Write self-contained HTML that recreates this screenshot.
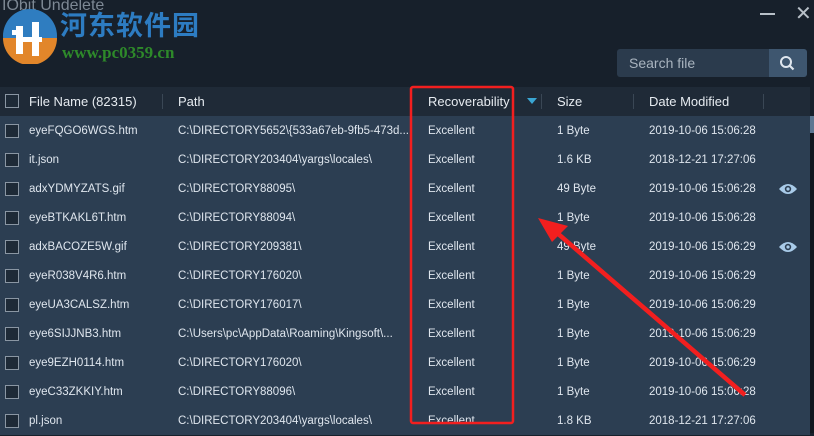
<!DOCTYPE html>
<html><head><meta charset="utf-8"><style>
*{margin:0;padding:0;box-sizing:border-box}
body{width:814px;height:433px;overflow:hidden;background:#17202b;font-family:"Liberation Sans",sans-serif;position:relative}
.abs{position:absolute}
.row{position:absolute;left:0;width:810px;height:29px;background:#2c3e52;color:#dfe6ee;font-size:11.5px}
.row span,.hd span{position:absolute;top:0;white-space:nowrap}
.row span{top:1px}
.cb{position:absolute;left:5px;width:14px;height:14px;border:1px solid #8a96a3;background:#1e2a37}
.eye{position:absolute;left:779px;top:9px}
</style></head><body>
<div class="abs" style="left:2px;color:#7d8894;font-size:16px;line-height:20px;top:-4px">IObit Undelete</div>
<svg class="abs" style="left:2px;top:8px" width="56" height="56" viewBox="0 0 56 56">
<circle cx="28" cy="28" r="27" fill="#2f7dc0"/>
<path d="M1 30 A27 27 0 0 0 55 30 Z" fill="#e2862a"/>
<rect x="14" y="18" width="7" height="28" fill="#fff"/>
<rect x="30" y="14" width="7" height="34" fill="#fff"/>
<rect x="10" y="22" width="10" height="5" fill="#fff"/>
<rect x="14" y="29" width="26" height="5" fill="#fff"/>
</svg>
<div class="abs" style="left:60px;top:8px;color:#2d7cc2;font-size:27px;font-weight:bold;font-family:'Noto Sans CJK SC',sans-serif;line-height:32px;letter-spacing:1px">河东软件园</div>
<div class="abs" style="left:62px;top:43px;color:#2e8a2a;font-size:17px;font-weight:bold;font-family:'Liberation Serif',serif">www.pc0359.cn</div>
<div class="abs" style="left:760px;top:13px;width:15px;height:2px;background:#b8c0c8"></div>
<div class="abs" style="left:795px;top:1px;color:#b8c0c8;font-size:20px">✕</div>
<div class="abs" style="left:617px;top:49px;width:152px;height:28px;background:#2b3b4d;border-radius:3px 0 0 3px;color:#a9b4bf;font-size:14px;line-height:28px;padding-left:12px">Search file</div>
<div class="abs" style="left:769px;top:49px;width:38px;height:28px;background:#3e566f;border-radius:0 3px 3px 0"></div>
<svg class="abs" style="left:779px;top:55px" width="16" height="16"><circle cx="7" cy="7" r="5" fill="none" stroke="#dfe6ee" stroke-width="2"/><line x1="10.5" y1="10.5" x2="14.5" y2="14.5" stroke="#dfe6ee" stroke-width="2.2"/></svg>
<div class="abs hd" style="left:0;top:87px;width:810px;height:29px;background:#1f2a37;color:#e6ebf0;font-size:13px;line-height:29px">
<div class="cb" style="top:7px"></div>
<span style="left:29px">File Name (82315)</span>
<div class="abs" style="left:162px;top:7px;width:1px;height:15px;background:#3a4755"></div>
<span style="left:178px">Path</span>
<span style="left:428px">Recoverability</span>
<svg class="abs" style="left:527px;top:11px" width="10" height="6"><path d="M0 0h10L5 6z" fill="#3aa6d3"/></svg>
<div class="abs" style="left:541px;top:7px;width:1px;height:15px;background:#3a4755"></div>
<span style="left:557px">Size</span>
<div class="abs" style="left:633px;top:7px;width:1px;height:15px;background:#3a4755"></div>
<span style="left:649px">Date Modified</span>
<div class="abs" style="left:763px;top:7px;width:1px;height:15px;background:#3a4755"></div>
</div>
<div class="abs" style="left:810px;top:116px;width:4px;height:317px;background:#11171f"></div>
<div class="abs" style="left:810px;top:116px;width:4px;height:17px;background:#5d7792"></div>
<div class="abs" style="left:0;top:116px;width:810px;height:317px;background:#2c3e52"></div>
<div id="rows"></div>
<svg class="abs" style="left:0;top:0" width="814" height="433">
<rect x="411" y="87" width="102" height="336" fill="none" stroke="#f21f1f" stroke-width="2.5" rx="2"/>
<line x1="745" y1="395" x2="556" y2="232" stroke="#f21f1f" stroke-width="4.5"/>
<path d="M538 218 L568 226 L552 242 Z" fill="#f21f1f"/>
</svg>
<script>
var d=[["eyeFQGO6WGS.htm","C:\\DIRECTORY5652\\{533a67eb-9fb5-473d...","1 Byte","2019-10-06 15:06:28",0],
["it.json","C:\\DIRECTORY203404\\yargs\\locales\\","1.6 KB","2018-12-21 17:27:06",0],
["adxYDMYZATS.gif","C:\\DIRECTORY88095\\","49 Byte","2019-10-06 15:06:28",1],
["eyeBTKAKL6T.htm","C:\\DIRECTORY88094\\","1 Byte","2019-10-06 15:06:28",0],
["adxBACOZE5W.gif","C:\\DIRECTORY209381\\","49 Byte","2019-10-06 15:06:29",1],
["eyeR038V4R6.htm","C:\\DIRECTORY176020\\","1 Byte","2019-10-06 15:06:29",0],
["eyeUA3CALSZ.htm","C:\\DIRECTORY176017\\","1 Byte","2019-10-06 15:06:29",0],
["eye6SIJJNB3.htm","C:\\Users\\pc\\AppData\\Roaming\\Kingsoft\\...","1 Byte","2019-10-06 15:06:29",0],
["eye9EZH0114.htm","C:\\DIRECTORY176020\\","1 Byte","2019-10-06 15:06:29",0],
["eyeC33ZKKIY.htm","C:\\DIRECTORY88096\\","1 Byte","2019-10-06 15:06:28",0],
["pl.json","C:\\DIRECTORY203404\\yargs\\locales\\","1.8 KB","2018-12-21 17:27:06",0]];
var h="";
d.forEach(function(r,i){
h+='<div class="row" style="top:'+(116+i*29)+'px;line-height:29px"><div class="cb" style="top:8px"></div><span style="left:29px">'+r[0]+'</span><span style="left:178px">'+r[1]+'</span><span style="left:428px">Excellent</span><span style="left:557px">'+r[2]+'</span><span style="left:649px">'+r[3]+'</span>'+(r[4]?'<svg class="eye" width="18" height="12" viewBox="0 0 18 12"><path d="M0 6Q9 -4 18 6Q9 16 0 6Z" fill="#a9cbe9"/><circle cx="9" cy="6" r="3.2" fill="#2c3e52"/><circle cx="9" cy="6" r="1.6" fill="#a9cbe9"/></svg>':'')+'</div>';
});
document.getElementById("rows").outerHTML=h;
</script>
</body></html>
